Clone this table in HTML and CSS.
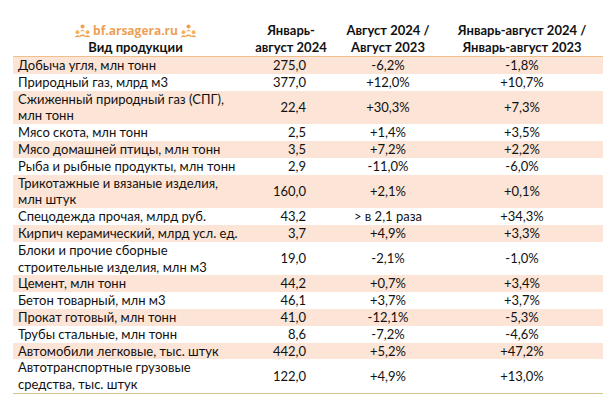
FILE: index.html
```html
<!DOCTYPE html>
<html lang="ru">
<head>
<meta charset="utf-8">
<title>Производство</title>
<link rel="stylesheet" href="styles.css">
</head>
<body>
<div class="sheet">
  <div class="row head">
    <div class="c1 hcell">
      <div class="logo">
        <svg class="ico" viewBox="0 0 16 13" width="17" height="14" aria-hidden="true">
          <circle cx="8" cy="2.3" r="1.9" fill="#f2a24e"/>
          <path d="M5.6 7.2 Q8 3.4 10.4 7.2 Q8 6 5.6 7.2Z" fill="#f2a24e"/>
          <circle cx="3.2" cy="7.6" r="1.8" fill="#f5b060"/>
          <circle cx="12.8" cy="7.6" r="1.8" fill="#f5b060"/>
          <path d="M0.6 12.6 Q3.2 8.6 5.8 12.6 Q3.2 11.2 0.6 12.6Z" fill="#eb9440"/>
          <path d="M10.2 12.6 Q12.8 8.6 15.4 12.6 Q12.8 11.2 10.2 12.6Z" fill="#eb9440"/>
          <path d="M5.2 11.6 Q8 9.4 10.8 11.6" stroke="#f2a24e" stroke-width="1.2" fill="none"/>
        </svg>
        <span class="logotext">bf.arsagera.ru</span>
        <svg class="ico" viewBox="0 0 16 13" width="17" height="14" aria-hidden="true">
          <circle cx="8" cy="2.3" r="1.9" fill="#f2a24e"/>
          <path d="M5.6 7.2 Q8 3.4 10.4 7.2 Q8 6 5.6 7.2Z" fill="#f2a24e"/>
          <circle cx="3.2" cy="7.6" r="1.8" fill="#f5b060"/>
          <circle cx="12.8" cy="7.6" r="1.8" fill="#f5b060"/>
          <path d="M0.6 12.6 Q3.2 8.6 5.8 12.6 Q3.2 11.2 0.6 12.6Z" fill="#eb9440"/>
          <path d="M10.2 12.6 Q12.8 8.6 15.4 12.6 Q12.8 11.2 10.2 12.6Z" fill="#eb9440"/>
          <path d="M5.2 11.6 Q8 9.4 10.8 11.6" stroke="#f2a24e" stroke-width="1.2" fill="none"/>
        </svg>
      </div>
      <div>Вид продукции</div>
    </div>
    <div class="c2 hcell">Январь-<br>август 2024</div>
    <div class="c3 hcell">Август 2024 /<br>Август 2023</div>
    <div class="c4 hcell">Январь-август 2024 /<br>Январь-август 2023</div>
  </div>

  <div class="row shade"><div class="c1">Добыча угля, млн тонн</div><div class="c2">275,0</div><div class="c3">-6,2%</div><div class="c4">-1,8%</div></div>
  <div class="row"><div class="c1">Природный газ, млрд м3</div><div class="c2">377,0</div><div class="c3">+12,0%</div><div class="c4">+10,7%</div></div>
  <div class="row shade tall"><div class="c1">Сжиженный природный газ (СПГ),<br>млн тонн</div><div class="c2">22,4</div><div class="c3">+30,3%</div><div class="c4">+7,3%</div></div>
  <div class="row"><div class="c1">Мясо скота, млн тонн</div><div class="c2">2,5</div><div class="c3">+1,4%</div><div class="c4">+3,5%</div></div>
  <div class="row shade"><div class="c1">Мясо домашней птицы, млн тонн</div><div class="c2">3,5</div><div class="c3">+7,2%</div><div class="c4">+2,2%</div></div>
  <div class="row"><div class="c1">Рыба и рыбные продукты, млн тонн</div><div class="c2">2,9</div><div class="c3">-11,0%</div><div class="c4">-6,0%</div></div>
  <div class="row shade tall"><div class="c1">Трикотажные и вязаные изделия,<br>млн штук</div><div class="c2">160,0</div><div class="c3">+2,1%</div><div class="c4">+0,1%</div></div>
  <div class="row"><div class="c1">Спецодежда прочая, млрд руб.</div><div class="c2">43,2</div><div class="c3">&gt; в 2,1 раза</div><div class="c4">+34,3%</div></div>
  <div class="row shade"><div class="c1">Кирпич керамический, млрд усл. ед.</div><div class="c2">3,7</div><div class="c3">+4,9%</div><div class="c4">+3,3%</div></div>
  <div class="row tall"><div class="c1">Блоки и прочие сборные<br>строительные изделия, млн м3</div><div class="c2">19,0</div><div class="c3">-2,1%</div><div class="c4">-1,0%</div></div>
  <div class="row shade"><div class="c1">Цемент, млн тонн</div><div class="c2">44,2</div><div class="c3">+0,7%</div><div class="c4">+3,4%</div></div>
  <div class="row"><div class="c1">Бетон товарный, млн м3</div><div class="c2">46,1</div><div class="c3">+3,7%</div><div class="c4">+3,7%</div></div>
  <div class="row shade"><div class="c1">Прокат готовый, млн тонн</div><div class="c2">41,0</div><div class="c3">-12,1%</div><div class="c4">-5,3%</div></div>
  <div class="row"><div class="c1">Трубы стальные, млн тонн</div><div class="c2">8,6</div><div class="c3">-7,2%</div><div class="c4">-4,6%</div></div>
  <div class="row shade"><div class="c1">Автомобили легковые, тыс. штук</div><div class="c2">442,0</div><div class="c3">+5,2%</div><div class="c4">+47,2%</div></div>
  <div class="row tall last"><div class="c1">Автотранспортные грузовые<br>средства, тыс. штук</div><div class="c2">122,0</div><div class="c3">+4,9%</div><div class="c4">+13,0%</div></div>
</div>
</body>
</html>
```

FILE: styles.css
```css
html, body {
  margin: 0;
  padding: 0;
  background: #ffffff;
}

body {
  font-family: Lato, "Open Sans", "Liberation Sans", sans-serif;
  font-size: 13px;
  color: #111111;
}

.sheet {
  width: 590px;
  margin-left: 13px;
  padding-top: 14px;
}

.row {
  display: grid;
  grid-template-columns: 245px 66px 128px 151px;
  height: 16.8px;
  line-height: 16.8px;
  align-items: center;
}

.row.tall {
  height: 33.6px;
}

.row.shade {
  background: #fce4d6;
}

.row.last {
  border-bottom: 1px solid #d8c38e;
}

.row.head {
  height: 43px;
  line-height: 17px;
  align-items: end;
  padding-bottom: 0;
  box-sizing: border-box;
  border-bottom: 1px solid #f2bf8c;
  font-weight: bold;
}

.c1 {
  padding-left: 5px;
  white-space: nowrap;
}

.c2 {
  text-align: right;
  padding-right: 18px;
}

.c3 {
  text-align: center;
}

.c4 {
  text-align: center;
  padding-right: 11px;
}

.hcell {
  text-align: center;
  padding-left: 0;
  padding-right: 0;
  white-space: nowrap;
}

.head .c4 {
  padding-right: 11px;
}

.head .c2 {
  margin-left: -10px;
  margin-right: -10px;
}

.head .c1 {
  padding-left: 0;
}

.logo {
  display: flex;
  justify-content: center;
  align-items: center;
  gap: 2px;
  height: 17px;
  padding-top: 2px;
}

.ico {
  display: block;
}

.logotext {
  font-family: "Open Sans", "Liberation Sans", sans-serif;
  font-size: 12px;
  font-weight: bold;
  color: #eda156;
  letter-spacing: 0;
}
```
